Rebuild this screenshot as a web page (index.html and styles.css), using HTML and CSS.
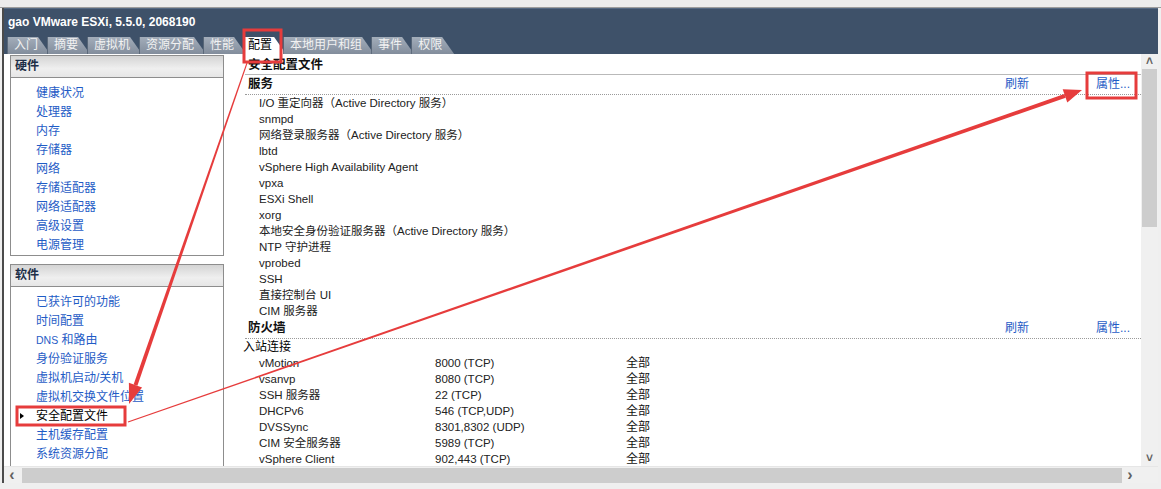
FILE: index.html
```
<!DOCTYPE html>
<html lang="zh-CN">
<head>
<meta charset="UTF-8">
<title>gao VMware ESXi - 配置</title>
<link rel="stylesheet" href="styles.css">
</head>
<body>

<div class="topstrip"></div>

<div class="window">
  <div class="header">
    <div class="title">gao VMware ESXi, 5.5.0, 2068190</div>
    <div class="tabs">
      <div class="tab">入门</div>
      <div class="tab">摘要</div>
      <div class="tab">虚拟机</div>
      <div class="tab">资源分配</div>
      <div class="tab">性能</div>
      <div class="tab active">配置</div>
      <div class="tab">本地用户和组</div>
      <div class="tab">事件</div>
      <div class="tab">权限</div>
    </div>
  </div>

  <div class="main">
    <div class="side">
      <div class="box">
        <div class="box-head">硬件</div>
        <div class="box-list">
          <div class="item">健康状况</div>
          <div class="item">处理器</div>
          <div class="item">内存</div>
          <div class="item">存储器</div>
          <div class="item">网络</div>
          <div class="item">存储适配器</div>
          <div class="item">网络适配器</div>
          <div class="item">高级设置</div>
          <div class="item">电源管理</div>
        </div>
      </div>
      <div class="box">
        <div class="box-head">软件</div>
        <div class="box-list">
          <div class="item">已获许可的功能</div>
          <div class="item">时间配置</div>
          <div class="item"><span class="small">DNS</span> 和路由</div>
          <div class="item">身份验证服务</div>
          <div class="item">虚拟机启动/关机</div>
          <div class="item">虚拟机交换文件位置</div>
          <div class="item cur">安全配置文件</div>
          <div class="item">主机缓存配置</div>
          <div class="item">系统资源分配</div>
          <div class="item">代理虚拟机设置</div>
        </div>
      </div>
    </div>

    <div class="content">
      <div class="page-title">安全配置文件</div>

      <div class="sec-head">
        <span class="sec-name">服务</span>
        <span class="link refresh">刷新</span>
        <span class="link">属性...</span>
      </div>
      <div class="rows">
        <div class="row">I/O 重定向器（Active Directory 服务）</div>
        <div class="row">snmpd</div>
        <div class="row">网络登录服务器（Active Directory 服务）</div>
        <div class="row">lbtd</div>
        <div class="row">vSphere High Availability Agent</div>
        <div class="row">vpxa</div>
        <div class="row">ESXi Shell</div>
        <div class="row">xorg</div>
        <div class="row">本地安全身份验证服务器（Active Directory 服务）</div>
        <div class="row">NTP 守护进程</div>
        <div class="row">vprobed</div>
        <div class="row">SSH</div>
        <div class="row">直接控制台 UI</div>
        <div class="row">CIM 服务器</div>
      </div>

      <div class="sec-head">
        <span class="sec-name">防火墙</span>
        <span class="link refresh">刷新</span>
        <span class="link">属性...</span>
      </div>
      <div class="sub">入站连接</div>
      <div class="fw">
        <span>vMotion</span><span>8000 (TCP)</span><span class="scope">全部</span>
        <span>vsanvp</span><span>8080 (TCP)</span><span class="scope">全部</span>
        <span>SSH 服务器</span><span>22 (TCP)</span><span class="scope">全部</span>
        <span>DHCPv6</span><span>546 (TCP,UDP)</span><span class="scope">全部</span>
        <span>DVSSync</span><span>8301,8302 (UDP)</span><span class="scope">全部</span>
        <span>CIM 安全服务器</span><span>5989 (TCP)</span><span class="scope">全部</span>
        <span>vSphere Client</span><span>902,443 (TCP)</span><span class="scope">全部</span>
      </div>
    </div>

    <div class="vscroll">
      <div class="arrow">&#708;</div>
      <div class="vthumb"></div>
      <div class="vtrack"></div>
      <div class="arrow">&#709;</div>
    </div>
  </div>

  <div class="hscroll">
    <div class="arrow">&lsaquo;</div>
    <div class="hthumb"></div>
    <div class="arrow">&rsaquo;</div>
    <div class="corner"></div>
  </div>
</div>

<!-- red annotations drawn over the screenshot -->
<svg class="annot" width="1161" height="489" viewBox="0 0 1161 489">
  <g fill="none" stroke="#e63c3c" stroke-width="3">
    <rect x="244" y="30" width="37" height="32"/>
    <rect x="1087" y="73" width="49" height="25"/>
    <rect x="17" y="407" width="108" height="18"/>
  </g>
  <g fill="#e63c3c">
    <polygon points="246.5,62.8 247.5,63.2 137.4,385.8 133.6,384.4"/>
    <polygon points="129,404 142.1,387.4 128.9,382.8"/>
    <polygon points="127.8,421.5 1064.3,94.0 1065.7,97.8 128.2,422.5"/>
    <polygon points="1082,90 1067.3,102.5 1062.7,89.3"/>
  </g>
</svg>

</body>
</html>
```

FILE: styles.css
```
* {
  box-sizing: border-box;
}

body {
  margin: 0;
  width: 1161px;
  height: 489px;
  overflow: hidden;
  background-color: #efefef;
  font-family: "Liberation Sans", "Noto Sans CJK SC", sans-serif;
  font-size: 11.5px;
  color: #222;
  position: relative;
}

.topstrip {
  height: 8px;
  background-color: #ececec;
  border-bottom: 1px solid #9c9c9c;
}

.window {
  margin-left: 2px;
  margin-right: 3px;
  border-left: 2px solid #4b4b4b;
  background-color: #fff;
}

/* dark band with title and tabs */
.header {
  background-color: #3e5169;
  border-top: 1px solid #566a83;
  padding-left: 3px;
}

.title {
  padding-top: 5px;
  padding-left: 1px;
  height: 28px;
  line-height: 16px;
  color: #fff;
  font-weight: bold;
  font-size: 12px;
}

.tabs {
  display: flex;
  height: 17px;
  align-items: flex-end;
}

.tab {
  height: 17px;
  line-height: 17px;
  padding: 0 12px 0 6px;
  margin-right: -3px;
  font-size: 12px;
  color: #f2f2f2;
  background: linear-gradient(#a3adba, #828d9c);
  clip-path: polygon(0 0, calc(100% - 12px) 0, 100% 100%, 0 100%);
  border-left: 1px solid #5a6879;
}

.tab.active {
  background: #fff;
  color: #000;
  border-left: none;
  padding-left: 5px;
  padding-right: 14px;
}

/* body of the window */
.main {
  display: flex;
  height: 412px;
  overflow: hidden;
}

.side {
  width: 228px;
  flex: none;
  padding: 1px 0 0 6px;
  overflow: hidden;
}

.box {
  width: 214px;
  border: 1px solid #8d8d8d;
  margin-bottom: 8px;
}

.box-head {
  height: 22px;
  line-height: 21px;
  padding-left: 4px;
  font-weight: bold;
  font-size: 12px;
  color: #1d2f48;
  background: linear-gradient(#d4d4d4, #efefef 60%, #e6e6e6);
  border-bottom: 1px solid #8d8d8d;
}

.box-list {
  padding: 6px 0 0 25px;
}

.item {
  height: 19px;
  line-height: 19px;
  font-size: 12px;
  color: #1f5cc6;
  white-space: nowrap;
}

.item .small {
  font-size: 10.5px;
}

.item.cur {
  color: #000;
}

.item.cur::before {
  content: "";
  display: inline-block;
  border-left: 4px solid #000;
  border-top: 3px solid transparent;
  border-bottom: 3px solid transparent;
  margin-left: -16px;
  margin-right: 12px;
  vertical-align: 1px;
}

.content {
  flex: 1;
  padding-left: 13px;
  min-width: 0;
}

.page-title {
  margin-top: 3px;
  height: 18px;
  line-height: 16px;
  padding-left: 3px;
  font-weight: bold;
  font-size: 12.5px;
  color: #111;
  border-bottom: 1px solid #b9b9b9;
}

.sec-head {
  display: flex;
  height: 20px;
  line-height: 19px;
  padding-left: 3px;
  border-bottom: 1px dotted #9a9a9a;
}

.sec-name {
  font-weight: bold;
  font-size: 12.5px;
  color: #111;
  margin-right: auto;
}

.link {
  font-size: 12px;
  color: #1f5cc6;
  width: 45px;
}

.link.refresh {
  margin-right: 46px;
}

.rows {
  padding-left: 14px;
}

.row {
  height: 16px;
  line-height: 16px;
  white-space: nowrap;
}

.sub {
  height: 16px;
  line-height: 16px;
  color: #000;
  font-size: 12px;
  margin-left: -2px;
}

.fw {
  display: grid;
  grid-template-columns: 176px 191px 1fr;
  grid-auto-rows: 16px;
  line-height: 16px;
  padding-left: 14px;
}

.fw .scope {
  font-size: 12px;
  color: #111;
}

/* scrollbars */
.vscroll {
  width: 17px;
  flex: none;
  background-color: #f0f0f0;
  display: flex;
  flex-direction: column;
  align-items: center;
}

.arrow {
  height: 15px;
  line-height: 15px;
  font-size: 12px;
  font-weight: bold;
  color: #606060;
  text-align: center;
  width: 15px;
}

.vthumb {
  width: 15px;
  height: 158px;
  background-color: #cdcdcd;
}

.vtrack {
  flex: 1;
}

.hscroll {
  display: flex;
  height: 17px;
  background-color: #f0f0f0;
  border-top: 1px solid #e6e6e6;
  align-items: center;
}

.hscroll .arrow {
  width: 16px;
  font-size: 16px;
  line-height: 14px;
}

.hthumb {
  width: 1100px;
  height: 15px;
  margin-left: 2px;
  background-color: #cdcdcd;
}

.hscroll .corner {
  flex: 1;
}

.annot {
  position: absolute;
  top: 0;
  left: 0;
  pointer-events: none;
}
```
